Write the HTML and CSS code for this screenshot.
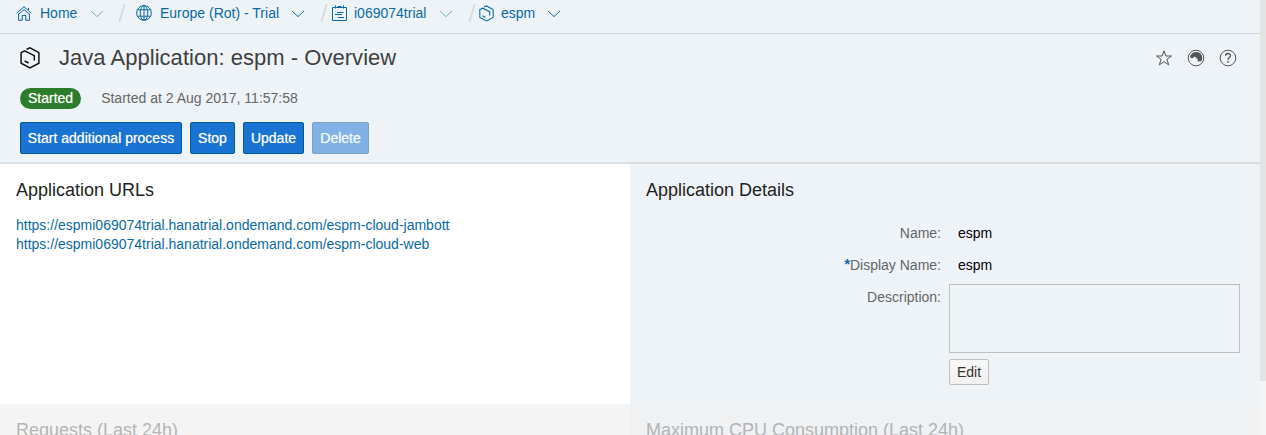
FILE: index.html
```html
<!DOCTYPE html>
<html lang="en">
<head>
<meta charset="utf-8">
<title>Java Application: espm - Overview</title>
<link rel="stylesheet" href="styles.css">
</head>
<body>
<svg class="defs" width="0" height="0">
  <symbol id="hex" viewBox="0 0 20 22"><path d="M6.5 2.3 10 .9 18.9 5.7V16.2L10 20.8 1.1 16.2V5.7L4.6 3.9 14.3 8.6V13.6M4.6 14 8.6 16"/></symbol>
  <symbol id="chev" viewBox="0 0 14 8"><path d="M1 1 7 6.6 13 1"/></symbol>
  <symbol id="slash" viewBox="0 0 8 18"><path d="M6.7 0 1.3 18"/></symbol>
</svg>
<div class="app">
  <main class="page">
    <nav class="crumbs">
      <a class="crumb home"><svg class="ico" viewBox="0 0 16 16"><path d="M.6 8.2 8 1.8l7.4 6.4M2.8 9 8 4.6 13.2 9M2.6 8.5v6.8h3.6v-4.8h3.6v4.8h3.6V8.5M12.5 3v2"/></svg><span class="label">Home</span><svg class="chev faint"><use href="#chev"/></svg></a>
      <svg class="slash"><use href="#slash"/></svg>
      <a class="crumb region"><svg class="ico" viewBox="0 0 16 16"><circle cx="8" cy="8" r="7.4"/><ellipse cx="8" cy="8" rx="3.8" ry="7.4"/><path d="M8 .6v14.8M1.5 4.8h13M1.5 11.2h13"/></svg><span class="label">Europe (Rot) - Trial</span><svg class="chev"><use href="#chev"/></svg></a>
      <svg class="slash"><use href="#slash"/></svg>
      <a class="crumb account"><svg class="ico" viewBox="0 0 16 16"><path d="M.5 2.5h14v13H.5zM3.5.3v3.2M11.5.3v3.2M5.5 1.5h4M5 7.5h6.5M3 9.5h7M6 12.5h6"/></svg><span class="label">i069074trial</span><svg class="chev faint"><use href="#chev"/></svg></a>
      <svg class="slash"><use href="#slash"/></svg>
      <a class="crumb program"><svg class="ico thick"><use href="#hex"/></svg><span class="label">espm</span><svg class="chev"><use href="#chev"/></svg></a>
    </nav>
    <header class="head">
      <div class="title-row">
        <svg class="title-icon"><use href="#hex"/></svg>
        <h1 class="title">Java Application: espm - Overview</h1>
        <div class="tools">
          <svg class="tool" viewBox="0 0 18 18"><path d="M9 1.7 10.8 7h5.7l-4.6 3.4 1.8 5.5L9 12.6l-4.7 3.3 1.8-5.5L1.5 7h5.7z"/></svg>
          <svg class="tool" viewBox="0 0 18 18"><circle cx="9" cy="9" r="7.8"/><path class="solid" d="M3 8.6C3.3 5 6 2.9 9.2 2.9c3.6 0 6 2.6 6 6 0 1.4-.4 2.5-1.1 3.5l-1.4-.5-.7.9-1.5-.8.5-2.2-1.6.1c.3-1.6-.9-2.5-2.3-2.1L5.6 9.2z"/></svg>
          <svg class="tool" viewBox="0 0 18 18"><circle cx="9" cy="9" r="7.8"/><path class="mark" d="M6.6 6.8C6.6 3.7 11.5 3.8 11.5 6.6 11.5 8.6 9 8.5 9 10.8M9 12.1v1.7"/></svg>
        </div>
      </div>
      <div class="status-row"><span class="badge">Started</span><span class="since">Started at 2 Aug 2017, 11:57:58</span></div>
      <div class="actions">
        <button class="btn start">Start additional process</button><button class="btn stop">Stop</button><button class="btn update">Update</button><button class="btn delete" disabled>Delete</button>
      </div>
    </header>
    <div class="panels">
      <section class="panel urls">
        <h2 class="heading">Application URLs</h2>
        <div class="links"><a>https://espmi069074trial.hanatrial.ondemand.com/espm-cloud-jambott</a><a>https://espmi069074trial.hanatrial.ondemand.com/espm-cloud-web</a></div>
      </section>
      <section class="panel details">
        <h2 class="heading">Application Details</h2>
        <div class="form">
          <span class="field-name">Name:</span><span class="value">espm</span>
          <span class="field-name"><span class="star">*</span>Display Name:</span><span class="value">espm</span>
          <span class="field-name">Description:</span><div class="controls"><textarea class="description"></textarea><button class="edit">Edit</button></div>
        </div>
      </section>
      <section class="panel pending"><h2 class="heading">Requests (Last 24h)</h2></section>
      <section class="panel pending cpu"><h2 class="heading">Maximum CPU Consumption (Last 24h)</h2></section>
    </div>
  </main>
  <div class="scrollbar"><div class="thumb"></div></div>
</div>
</body>
</html>
```
FILE: styles.css
```css
* { box-sizing: border-box; }
html, body { margin: 0; height: 100%; overflow: hidden; }
body { font: 14px/16px "Liberation Sans", Arial, sans-serif; color: #000; background: #fff; }
.defs { display: block; }
svg { fill: none; stroke: currentColor; flex: none; }
.app { display: flex; height: 435px; overflow: hidden; }
.page { width: 1260px; height: 435px; overflow: hidden; }
.scrollbar { width: 6px; background: #f5f5f5; }
.thumb { height: 381px; background: #e3e3e3; }

.crumbs { display: flex; height: 34px; padding: 0 0 7px 16px; align-items: center; background: #eef3f8; border-bottom: 1px solid #d0d6db; color: #0b6aa0; }
.crumb { display: flex; align-items: center; }
.ico { width: 16px; height: 16px; margin-right: 8px; stroke-width: 1; }
.ico.thick { width: 15px; height: 17px; margin-right: 7px; stroke-width: 1.4; }
.chev { width: 14px; height: 8px; margin-top: 2px; }
.faint { opacity: .5; }
.slash { width: 8px; height: 18px; color: #d5d9dc; stroke-width: 1.8; }
.home { width: 102px; }
.home .label { width: 50px; }
.region { width: 184px; margin-left: 10px; }
.region .label { width: 131px; white-space: nowrap; }
.account { width: 136px; margin-left: 4px; }
.account .label { width: 85px; }
.account .ico { margin-right: 6px; }
.program { margin-left: 3px; }
.program .label { width: 46px; }

.head { height: 130px; padding: 10px 20px 0; background: #eef3f8; border-bottom: 2px solid #dbdcde; }
.title-row { display: flex; align-items: center; height: 28px; }
.title-icon { width: 20px; height: 22px; stroke-width: 1.5; color: #111; }
.title { margin: 0 0 0 19px; font-size: 22px; line-height: 28px; font-weight: 400; letter-spacing: .03px; color: #3f3f3f; }
.tools { display: flex; gap: 14px; margin-left: auto; margin-right: -6px; padding-right: 9px; color: #555; }
.tool { width: 18px; height: 18px; }
.solid { fill: currentColor; stroke: none; }
.mark { stroke-width: 1.4; }
.status-row { display: flex; align-items: center; height: 20px; margin-top: 16px; }
.badge { height: 21px; padding: 0 8px; border-radius: 11px; line-height: 20px; background: #2b7d2b; color: #fff; text-shadow: 0 0 1px rgba(255, 255, 255, .6); }
.since { margin-left: 20px; color: #666; }
.actions { display: flex; gap: 8px; margin-top: 14px; }
.btn { height: 32px; padding: 0 0 1px; border: 1px solid #00588c; border-radius: 2px; background: #1873d3; color: #fff; font: inherit; text-shadow: 0 0 1px rgba(255, 255, 255, .6); white-space: nowrap; }
.start { width: 162px; }
.stop { width: 45px; }
.update { width: 61px; }
.delete { width: 57px; opacity: .5; }

.panels { display: grid; grid-template-columns: 630px 630px; grid-template-rows: 240px 60px; }
.panel { padding: 16px 16px 0; }
.heading { margin: 0; font-size: 18px; line-height: 20px; font-weight: 400; color: #222; }
.details { background: #eef3f8; }
.links { display: flex; flex-direction: column; margin-top: 16px; line-height: 19px; color: #0b6aa0; }
.form { display: grid; grid-template-columns: 295px 291px; column-gap: 8px; grid-template-rows: 32px 32px auto; margin-top: 17px; line-height: 32px; }
.field-name { text-align: right; color: #666; }
.value { padding-left: 9px; }
.star { color: #0064b1; font-weight: 700; line-height: 16px; vertical-align: 1px; }
.controls { display: flex; flex-direction: column; align-items: flex-start; gap: 6px; padding-top: 3px; }
.description { width: 291px; height: 69px; border: 1px solid #bfbfbf; background: transparent; resize: none; }
.edit { width: 40px; height: 26px; padding: 0; border: 1px solid #bfbfbf; border-radius: 2px; background: linear-gradient(#f8f8f8, #f0f0f0); color: #333; font: inherit; line-height: 24px; }
.pending { background: #f4f4f4; }
.pending .heading { color: #b5b5b5; }
.cpu { background: #eff1f3; }
.cpu .heading { color: #b1b4b7; }
```
